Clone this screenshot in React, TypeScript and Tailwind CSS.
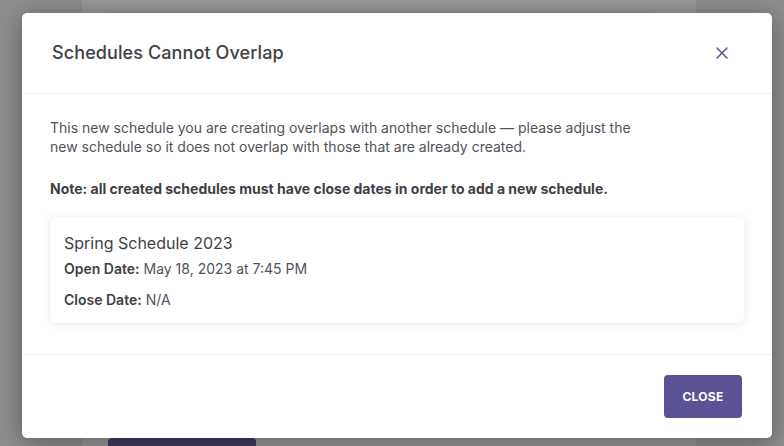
import { X } from "lucide-react"

export default function App() {
  return (
    <div className="relative h-[446px] w-[784px] overflow-hidden font-['Inter',sans-serif]">
      {/* dimmed page behind the dialog */}
      <div className="flex h-full">
        <div className="w-[82px] bg-[#8d8d8d]" />
        <div className="flex flex-1 flex-col bg-[#979797]">
          <div className="mx-[23px] mt-[12px] h-px w-[550px] bg-[#8a8a8a]" />
          <div className="flex-1" />
          <div className="ml-[26px] h-[8px] w-[148px] rounded-t bg-[#3f3b5c]" />
        </div>
        <div className="w-[88px] bg-[#8d8d8d]" />
      </div>

      <div className="absolute left-[22px] top-[13px] flex h-[425px] w-[750px] flex-col rounded-[5px] bg-white shadow-[0_4px_24px_rgba(0,0,0,0.35)]">
        <div className="flex items-center justify-between border-b border-[#efefef] px-[30px] py-[26px]">
          <h2 className="text-lg leading-7 font-medium tracking-[0.1px] text-[#3f3f46]">Schedules Cannot Overlap</h2>
          <button className="mr-[10px] text-[#5b5296]">
            <X className="h-5 w-5" strokeWidth={1.7} />
          </button>
        </div>

        <div className="flex-1 px-[28px] pt-6">
          <p className="max-w-[600px] text-sm leading-[19px] text-[#52525b]">
            This new schedule you are creating overlaps with another schedule — please adjust the new schedule so it does not overlap with those that are already created.
          </p>
          <p className="mt-[23px] text-sm leading-5 font-bold text-[#3f3f46]">
            Note: all created schedules must have close dates in order to add a new schedule.
          </p>
          <div className="mt-[18px] rounded-md bg-white px-[14px] pt-[14px] pb-[13px] shadow-[0_1px_8px_rgba(0,0,0,0.09)]">
            <div className="text-base leading-6 text-[#3f3f46]">Spring Schedule 2023</div>
            <div className="mt-1 text-sm leading-5 text-[#52525b]">
              <span className="font-semibold text-[#3f3f46]">Open Date:</span> May 18, 2023 at 7:45 PM
            </div>
            <div className="mt-[11px] text-sm leading-5 text-[#52525b]">
              <span className="font-semibold text-[#3f3f46]">Close Date:</span> N/A
            </div>
          </div>
        </div>

        <div className="flex justify-end border-t border-[#efefef] px-[30px] py-[20px]">
          <button className="h-[43px] w-[78px] rounded-[4px] bg-[#5b5296] text-xs font-bold tracking-wide text-white">
            CLOSE
          </button>
        </div>
      </div>
    </div>
  )
}
